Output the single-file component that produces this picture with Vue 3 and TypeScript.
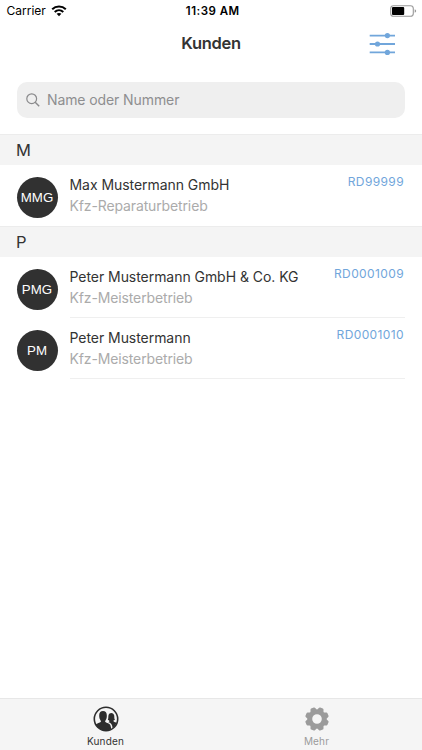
<script setup lang="ts">
interface Customer {
  initials: string
  name: string
  kind: string
  number: string
}

interface Section {
  letter: string
  customers: Customer[]
}

const sections: Section[] = [
  {
    letter: 'M',
    customers: [
      { initials: 'MMG', name: 'Max Mustermann GmbH', kind: 'Kfz-Reparaturbetrieb', number: 'RD99999' },
    ],
  },
  {
    letter: 'P',
    customers: [
      { initials: 'PMG', name: 'Peter Mustermann GmbH & Co. KG', kind: 'Kfz-Meisterbetrieb', number: 'RD0001009' },
      { initials: 'PM', name: 'Peter Mustermann', kind: 'Kfz-Meisterbetrieb', number: 'RD0001010' },
    ],
  },
]

const teeth: number[] = [22.5, 67.5, 112.5, 157.5, 202.5, 247.5, 292.5, 337.5]
</script>

<template>
  <div class="screen">
    <div class="status">
      <div class="carrier">
        <span>Carrier</span>
        <svg class="wifi" width="16" height="12" viewBox="0 0 16 12" fill="none" stroke="#000" stroke-width="2">
          <path d="M1.2 4.3C5 .6 11 .6 14.8 4.3" />
          <path d="M3.7 7C6.2 4.7 9.8 4.7 12.3 7" />
          <path d="M5.6 8.8C7 7.6 9 7.6 10.4 8.8L8 11.2Z" fill="#000" stroke="none" />
        </svg>
      </div>
      <span class="time">11:39 AM</span>
      <svg class="battery" width="27" height="12" viewBox="0 0 27 12">
        <rect x=".7" y=".7" width="22.6" height="10.6" rx="2.8" fill="#fff" stroke="#999" stroke-width="1.1" />
        <rect x="2" y="2" width="12.2" height="8" rx="1" fill="#000" />
        <path d="M24.7 4.2Q26.2 4.7 26.2 6T24.7 7.8Z" fill="#999" />
      </svg>
    </div>

    <header class="nav">
      <h1>Kunden</h1>
      <svg class="filter" width="27" height="22" viewBox="0 0 27 22" fill="#71a6db" stroke="#71a6db">
        <path d="M.7 2.6H26M.7 11H26M.7 19.4H26" stroke-width="1.8" />
        <g stroke="none">
          <circle cx="18.4" cy="2.6" r="2.6" />
          <circle cx="8.5" cy="11" r="2.6" />
          <circle cx="18.4" cy="19.4" r="2.6" />
        </g>
      </svg>
    </header>

    <div class="search">
      <svg width="14" height="14" viewBox="0 0 14 14" fill="none" stroke="#8a8a8c" stroke-width="1.2">
        <circle cx="5.7" cy="5.7" r="4.9" />
        <path d="M9.2 9.2L13.2 13.2" stroke-width="1.4" />
      </svg>
      <span class="placeholder">Name oder Nummer</span>
    </div>

    <main class="list">
      <section v-for="section in sections" :key="section.letter">
        <h2>{{ section.letter }}</h2>
        <article v-for="customer in section.customers" :key="customer.number" class="row">
          <div class="avatar">{{ customer.initials }}</div>
          <div class="details">
            <div class="text">
              <span class="name">{{ customer.name }}</span>
              <span class="kind">{{ customer.kind }}</span>
            </div>
            <span class="number">{{ customer.number }}</span>
          </div>
        </article>
      </section>
    </main>

    <nav class="tabs">
      <div class="tab active">
        <svg width="26" height="26" viewBox="0 0 26 26">
          <circle cx="13" cy="13" r="11.7" fill="#f5f5f5" stroke="#2d2d2d" stroke-width="1.6" />
          <path d="M2.6 18.6C4.2 17.2 6.8 17 7.7 16.1C8.2 15.5 7.8 14.7 7.2 13.7C6.3 12.5 6.2 11.1 6.2 9.1C6.3 6.4 7.6 5 10 5S13.7 6.4 13.8 9.1C13.9 11.1 13.8 12.5 12.9 13.7C12.3 14.7 11.9 15.5 12.4 16.1C13.7 17.1 16.6 17.3 17.4 19.3L18.4 23.2C15 25.2 10 25 6.8 23C5.2 22 3.6 20.3 2.6 18.6Z" fill="#2d2d2d" />
          <path d="M15.1 16.1C16.4 15.7 16.8 15.2 16.1 14.4L14.8 13.8C15.6 12.7 15.1 11 15.5 9.3C15.9 7.6 17 6.9 18.4 6.9S20.9 7.8 21.2 9.5C21.5 11.2 21 12.7 22 13.8L20.5 14.5C20.1 15.4 20.9 15.8 22.2 16.2L23.6 16.8C22.8 18.9 21.4 20.9 19.6 22.2C19.3 18.5 17.9 17 15.1 16.1Z" fill="#2d2d2d" />
        </svg>
        <span>Kunden</span>
      </div>
      <div class="tab">
        <svg width="26" height="26" viewBox="-13 -13 26 26" fill="#9b9b9b">
          <circle r="7.2" fill="none" stroke="#9b9b9b" stroke-width="4.8" />
          <path v-for="angle in teeth" :key="angle" :transform="`rotate(${angle})`" d="M-3.5 -8.5L-2.4 -11.2Q-2.1 -11.9 -1.4 -11.9H1.4Q2.1 -11.9 2.4 -11.2L3.5 -8.5Z" />
        </svg>
        <span>Mehr</span>
      </div>
    </nav>
  </div>
</template>

<style>
body {
  background: #fff;
}
</style>

<style scoped>
.screen {
  box-sizing: border-box;
  display: flex;
  flex-direction: column;
  width: 100%;
  height: 750px;
  overflow: hidden;
  background: #fff;
  color: #333;
  font-family: Inter, 'Liberation Sans', sans-serif;
}

.status {
  display: grid;
  grid-template-columns: 1fr auto 1fr;
  align-items: center;
  height: 22px;
  padding: 0 5px 0 6.5px;
  color: #000;
  font-size: 12px;
  line-height: 22px;
}

.carrier {
  display: flex;
  align-items: center;
  gap: 5px;
}

.wifi {
  margin-bottom: 1px;
}

.time {
  padding-left: 2px;
  font-size: 11.5px;
  font-weight: 600;
  letter-spacing: 0.5px;
}

.battery {
  justify-self: end;
  margin-bottom: 1px;
}

.nav {
  display: grid;
  grid-template-columns: 1fr auto 1fr;
  align-items: center;
  height: 44px;
  padding: 0 26px;
}

h1 {
  grid-column: 2;
  margin: 0 0 2px;
  font-size: 16.5px;
  font-weight: 600;
  letter-spacing: -0.3px;
  line-height: 42px;
}

.filter {
  justify-self: end;
}

.search {
  display: flex;
  align-items: center;
  gap: 7px;
  height: 36px;
  margin: 16px 17px;
  padding: 0 9px;
  border-radius: 10px;
  background: #efefef;
  color: #8e8e90;
  font-size: 14px;
  letter-spacing: -0.1px;
}

.placeholder {
  padding-bottom: 1px;
}

.list {
  flex: 1;
}

h2 {
  box-sizing: border-box;
  height: 31px;
  margin: 0;
  padding-left: 16px;
  border-top: 1px solid #ececec;
  background: #f4f4f4;
  font-size: 16.5px;
  font-weight: 400;
  line-height: 31px;
}

.row {
  display: flex;
  gap: 12px;
  height: 61px;
  padding: 0 17px 0 16.5px;
}

.avatar {
  width: 41px;
  height: 41px;
  margin-top: 12px;
  border-radius: 50%;
  background: #313131;
  color: #fff;
  font-family: 'Liberation Sans', sans-serif;
  font-size: 13.3px;
  line-height: 41px;
  text-align: center;
}

.details {
  box-sizing: border-box;
  display: flex;
  flex: 1;
  justify-content: space-between;
  border-bottom: 1px solid #efefef;
}

.row:only-of-type .details {
  border-bottom-color: transparent;
}

.text {
  display: flex;
  flex-direction: column;
  padding-top: 9px;
  font-size: 14px;
  line-height: 21px;
  white-space: nowrap;
}

.name {
  letter-spacing: -0.05px;
}

.kind {
  color: #ababab;
  letter-spacing: -0.13px;
}

.number {
  padding: 7px 1px 0 0;
  color: #71a6db;
  font-size: 12px;
  letter-spacing: 0.38px;
  line-height: 19px;
}

.tabs {
  box-sizing: border-box;
  display: flex;
  height: 52px;
  border-top: 1px solid #e7e7e7;
  background: #f5f5f5;
}

.tab {
  display: flex;
  flex: 1;
  flex-direction: column;
  align-items: center;
  padding-top: 7px;
  color: #9b9b9b;
  font-size: 10px;
  letter-spacing: 0.15px;
  line-height: 18px;
}

.active {
  color: #333;
}
</style>
